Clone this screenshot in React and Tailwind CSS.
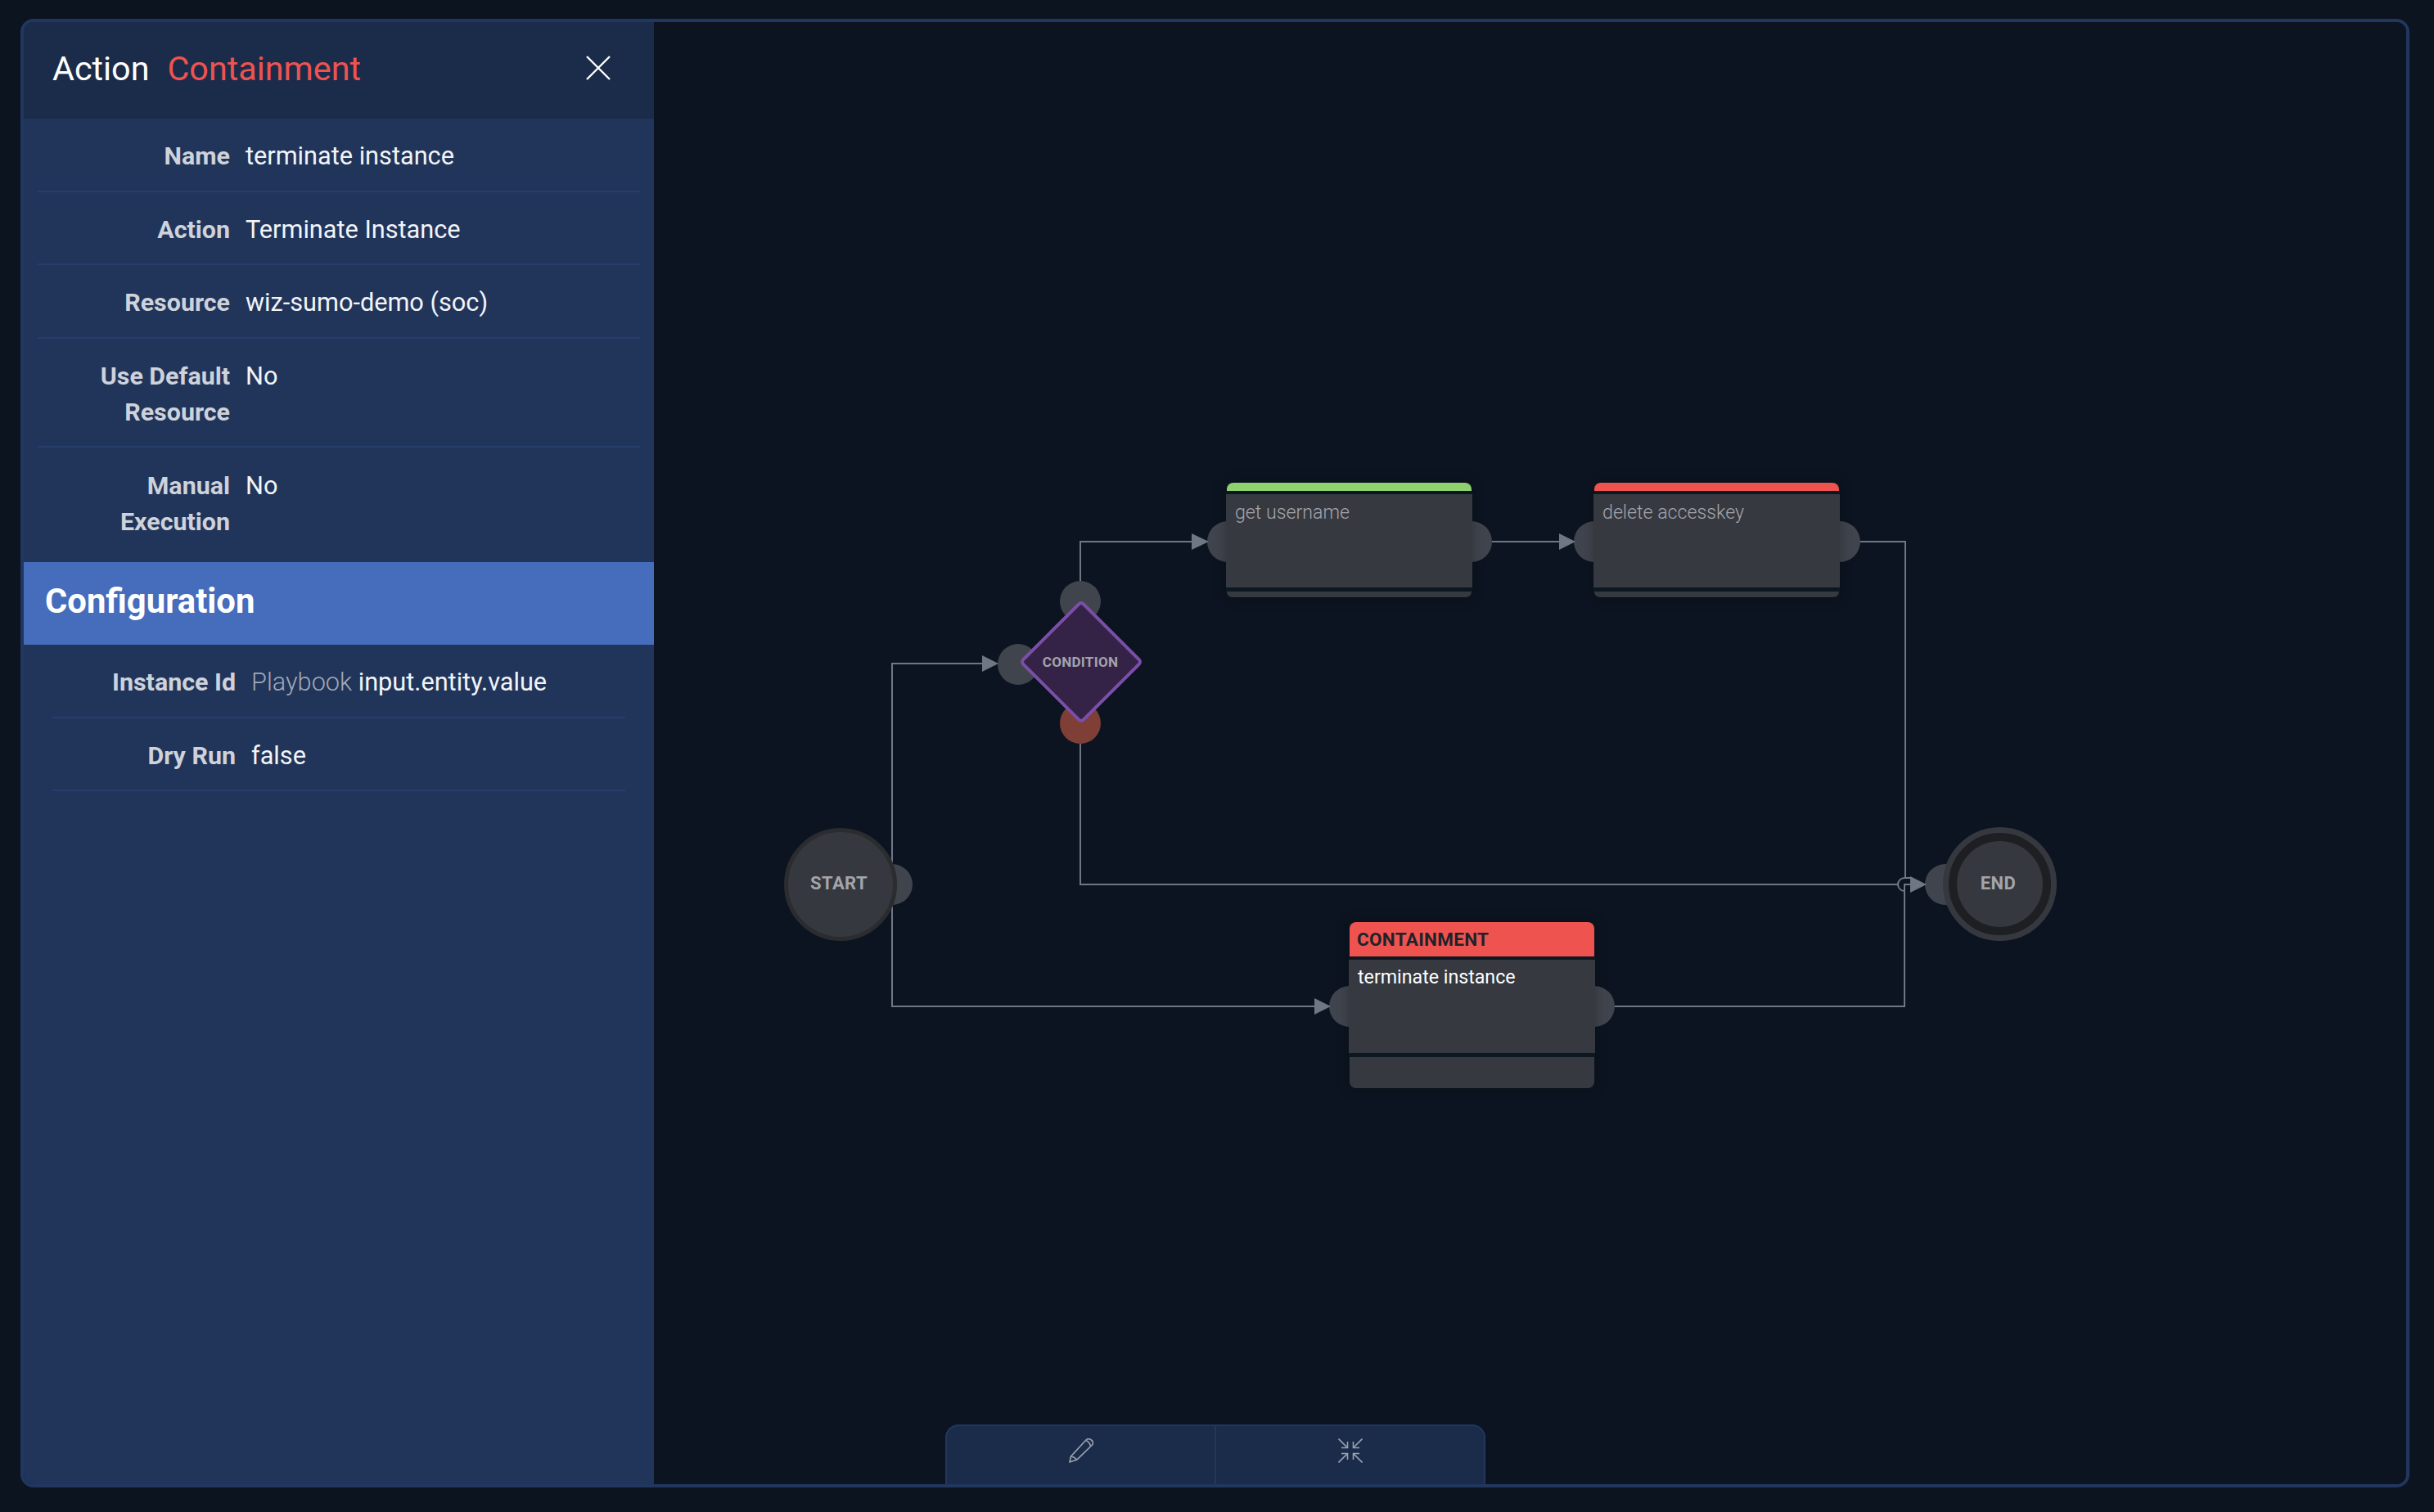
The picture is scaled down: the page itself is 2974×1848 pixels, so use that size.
import React from "react";

function Row({ label, children, labelW = "w-[235px]", line = true, pad = "pt-[24px] pb-[19.5px]" }) {
  return (
    <div className={`flex gap-[19px] leading-[44px] ${pad} ${line ? "border-b-2 border-[#253e6b]" : ""}`}>
      <div className={`${labelW} shrink-0 text-right text-[30.4px] font-bold text-[#ced2da]`}>{label}</div>
      <div className="text-[30.7px] font-normal text-[#f2f4f7]">{children}</div>
    </div>
  );
}

function Port({ pos, red }) {
  return <div className={`absolute h-[50px] w-[50px] rounded-full ${red ? "bg-[#7f3f36]" : "bg-[#40444c]"} ${pos}`} />;
}

function Node({ pos, accent, title, text, bright, footer }) {
  return (
    <div className={`absolute flex w-[301px] flex-col shadow-[0_0_14px_rgba(0,0,0,0.25)] ${pos}`}>
      <div className={`mx-px flex items-center rounded-t-lg ${accent} ${title ? "h-[42px] px-[9px] pt-px" : "h-[10px]"}`}>
        {title && <span className="text-[22.5px] font-bold tracking-[0.3px] text-[#1f2229]">{title}</span>}
      </div>
      <div className="h-[4px] bg-[#0d1722]" />
      <div className={`h-[114px] bg-[#363940] px-[11px] ${bright ? "pt-[6px]" : "pt-[7px]"}`}>
        <span className={`text-[23.2px] leading-[30px] ${bright ? "text-white" : "font-light text-[#a3a5ab]"}`}>{text}</span>
      </div>
      <div className="h-[5px] bg-[#0d1722]" />
      <div className={`mx-px rounded-b-lg bg-[#363940] ${footer}`} />
    </div>
  );
}

export default function App() {
  return (
    <div className="relative h-[1848px] w-[2974px] overflow-hidden bg-[#0c1420] pb-[30px] pl-[25px] pr-[30px] pt-[23px] font-['Roboto',sans-serif]">
      <div className="flex h-full overflow-hidden rounded-2xl border-4 border-[#22375f]">
        {/* Side panel */}
        <aside className="flex w-[770px] shrink-0 flex-col bg-[#21355b]">
          <header className="flex h-[118px] shrink-0 items-start justify-between bg-[#1b2c4a] pl-[35px] pr-[53px] pt-[33px]">
            <div className="flex gap-[22px] text-[41.3px] leading-[48px]">
              <span className="text-white">Action</span>
              <span className="text-[#ef5350]">Containment</span>
            </div>
            <svg className="mt-[8px]" width="30" height="30" viewBox="0 0 30 30" fill="none" stroke="#ffffff" strokeWidth="2.4">
              <path d="M1 1 L29 29 M29 1 L1 29" />
            </svg>
          </header>

          <div className="mx-[17px]">
            <Row label="Name">terminate instance</Row>
            <Row label="Action">Terminate Instance</Row>
            <Row label="Resource">wiz-sumo-demo (soc)</Row>
            <Row label={<>Use Default<br />Resource</>}>No</Row>
            <Row label={<>Manual<br />Execution</>} line={false} pad="pt-[25px] pb-[27px]">No</Row>
          </div>

          <div className="flex h-[101px] shrink-0 items-center bg-[#456dbb] pb-[4px] pl-[26px] text-[41.8px] font-bold text-white">
            Configuration
          </div>

          <div className="mx-[35px]">
            <Row label="Instance Id" labelW="w-[224px]">
              <span className="font-light text-[#a0a8b6]">Playbook</span> input.entity.value
            </Row>
            <Row label="Dry Run" labelW="w-[224px]">false</Row>
          </div>
        </aside>

        {/* Canvas */}
        <main className="relative min-w-0 flex-1 bg-[#0b1420]">
          <div className="absolute bottom-0 left-[356px] flex h-[73px] w-[660px] rounded-t-2xl border-x-2 border-t-2 border-[#22375f] bg-[#1b2c4a]">
            <button className="flex flex-1 justify-center pt-[15px]">
              <svg width="30" height="30" viewBox="0 0 30 30" fill="none" stroke="#9aa1ae" strokeWidth="1.7" strokeLinejoin="round">
                <path d="M1 29 L2.5 22 L20.5 2.5 C22.5 0.2 25.2 0.4 27.5 2 C29.8 3.8 29.8 6.2 28.5 8 L10 26 Z" />
                <path d="M2.5 22 C5 22.3 8 24 10 26 M21 2.5 C23 3.4 25.5 6 26.5 9" />
              </svg>
            </button>
            <div className="w-[2px] bg-[#22375f]" />
            <button className="flex flex-1 justify-center pt-[15px]">
              <svg width="30" height="30" viewBox="0 0 30 30" fill="none" stroke="#9aa1ae" strokeWidth="1.6">
                <path d="M0.5 0.5 L11.5 11.5 M11.5 4 V11.5 H4" />
                <path d="M29.5 0.5 L18.5 11.5 M18.5 4 V11.5 H26" />
                <path d="M0.5 29.5 L11.5 18.5 M11.5 26 V18.5 H4" />
                <path d="M29.5 29.5 L18.5 18.5 M18.5 26 V18.5 H26" />
              </svg>
            </button>
          </div>
        </main>
      </div>

      {/* Diagram, in page coordinates */}
      <div className="absolute inset-0">
        <svg className="absolute inset-0" width="2974" height="1848" fill="none" stroke="#6f7684" strokeWidth="2">
          <path d="M1090 1081 V811 H1202" />
          <path d="M1090 1081 V1230 H1608" />
          <path d="M1320 735 V662 H1458" />
          <path d="M1823 662 H1907" />
          <path d="M2272 662 H2328 V1073" />
          <path d="M1320 884 V1081 H2319" />
          <path d="M1973 1230 H2327 V1081 H2336" />
          <path d="M2319 1081 A8 8 0 0 1 2327 1073 H2336" />
          <path d="M2319 1081 A8 8 0 0 0 2327 1089" />
        </svg>

        <Port pos="left-[1475px] top-[637px]" />
        <Port pos="left-[1773px] top-[637px]" />
        <Port pos="left-[1923px] top-[637px]" />
        <Port pos="left-[2223px] top-[637px]" />
        <Port pos="left-[1295px] top-[710px]" />
        <Port pos="left-[1219px] top-[787px]" />
        <Port pos="left-[1295px] top-[859px]" red />
        <Port pos="left-[1065px] top-[1056px]" />
        <Port pos="left-[1624px] top-[1205px]" />
        <Port pos="left-[1923px] top-[1205px]" />
        <Port pos="left-[2352px] top-[1056px]" />

        <Node pos="left-[1498px] top-[590px]" accent="bg-[#8fd16f]" text="get username" footer="h-[7px]" />
        <Node pos="left-[1947px] top-[590px]" accent="bg-[#ef5350]" text="delete accesskey" footer="h-[7px]" />
        <Node pos="left-[1648px] top-[1127px]" accent="bg-[#ef5350]" title="CONTAINMENT" text="terminate instance" bright footer="h-[38px]" />

        {/* Condition */}
        <div className="absolute left-[1267px] top-[755px] h-[108px] w-[108px] rotate-45 rounded-[6px] border-4 border-[#7b4fa8] bg-[#352347]" />
        <div className="absolute left-[1246px] top-[797px] w-[148px] text-center text-[17px] font-bold leading-[24px] tracking-[0.3px] text-[#a3a3aa]">CONDITION</div>

        {/* Start */}
        <div className="absolute left-[958px] top-[1012px] flex h-[138px] w-[138px] items-center justify-center rounded-full border-[5px] border-[#2b2c2f] bg-[#35383e] pb-[4px] pr-[4px] text-[22px] font-bold tracking-[0.4px] text-[#a3a5ab]">START</div>

        {/* End */}
        <div className="absolute left-[2374px] top-[1011px] flex h-[139px] w-[139px] items-center justify-center rounded-full border-[7px] border-[#35383e] bg-[#1e1f22]">
          <div className="flex h-[105px] w-[105px] items-center justify-center rounded-full bg-[#35383e] pb-[3px] pr-[4px] text-[22px] font-bold tracking-[0.4px] text-[#a3a5ab]">END</div>
        </div>

        <svg className="absolute inset-0" width="2974" height="1848" fill="#6f7684">
          <path d="M1200 801 L1220 811 L1200 821 Z" />
          <path d="M1456 652 L1477 662 L1456 672 Z" />
          <path d="M1905 652 L1925 662 L1905 672 Z" />
          <path d="M1606 1220 L1626 1230 L1606 1240 Z" />
          <path d="M2334 1071 L2354 1081 L2334 1091 Z" />
        </svg>
      </div>
    </div>
  );
}
